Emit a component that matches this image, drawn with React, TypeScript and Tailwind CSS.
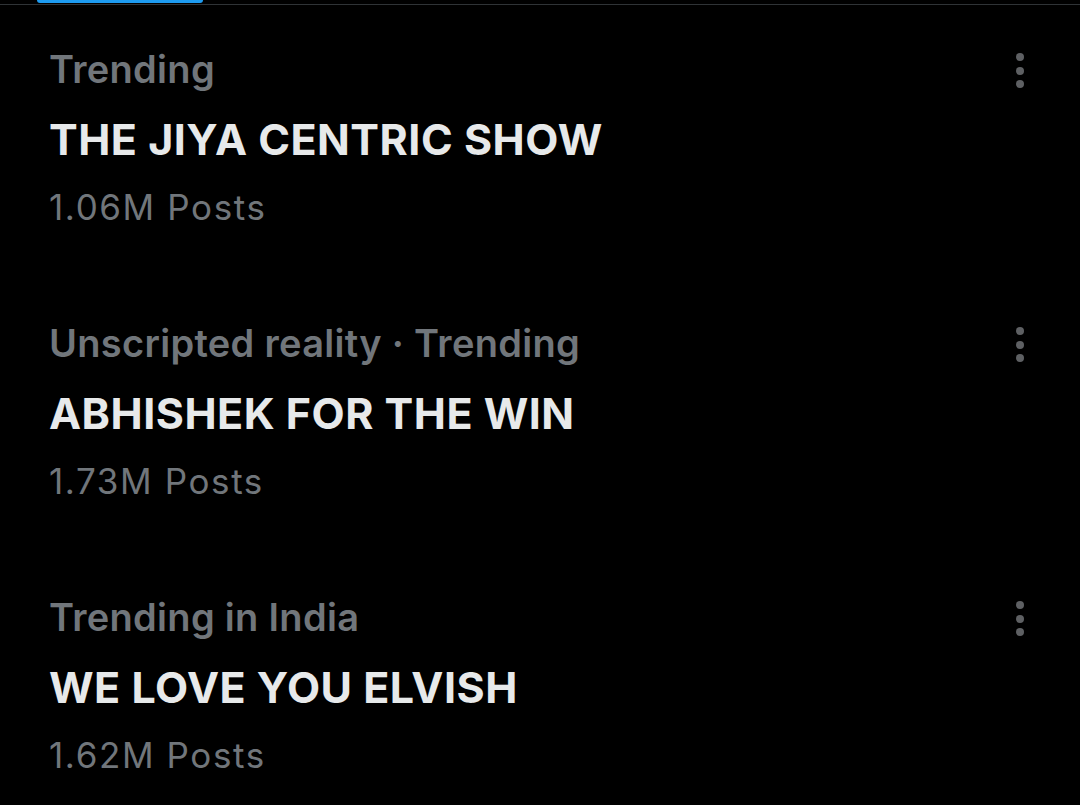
import { ReactNode } from 'react';

interface Trend {
  context: ReactNode;
  title: string;
  posts: string;
}

const trends: Trend[] = [
  { context: 'Trending', title: 'THE JIYA CENTRIC SHOW', posts: '1.06M Posts' },
  { context: 'Unscripted reality · Trending', title: 'ABHISHEK FOR THE WIN', posts: '1.73M Posts' },
  { context: 'Trending in India', title: 'WE LOVE YOU ELVISH', posts: '1.62M Posts' },
];

function MoreDots() {
  return (
    <div className="flex flex-col items-center gap-[5.5px] pt-[8px]">
      <span className="block w-[8px] h-[8px] rounded-full bg-[#5e6063]"></span>
      <span className="block w-[8px] h-[8px] rounded-full bg-[#5e6063]"></span>
      <span className="block w-[8px] h-[8px] rounded-full bg-[#5e6063]"></span>
    </div>
  );
}

export default function App() {
  return (
    <div
      className="w-[1080px] h-[805px] bg-black overflow-hidden"
      style={{ fontFamily: 'Inter, "Noto Sans", sans-serif' }}
    >
      <div className="relative h-[5px] border-b border-[#2f3336]">
        <div className="absolute left-[37px] top-0 w-[166px] h-[3px] rounded-b-full bg-[#1d9bf0]"></div>
      </div>

      <div className="flex flex-col gap-[90px] pt-[40px] pl-[49px] pr-[56px]">
        {trends.map((t, i) => (
          <div key={i} className="flex justify-between">
            <div className="flex flex-col">
              <div className="text-[38px] leading-[48px] font-semibold tracking-[0.3px] text-[#71767b]">{t.context}</div>
              <div className="mt-[20px] text-[43px] leading-[52px] font-bold tracking-[0.5px] text-[#e7e9ea]">{t.title}</div>
              <div className="mt-[20px] text-[35px] leading-[44px] font-normal tracking-[1.6px] text-[#71767b]">{t.posts}</div>
            </div>
            <MoreDots />
          </div>
        ))}
      </div>
    </div>
  );
}
